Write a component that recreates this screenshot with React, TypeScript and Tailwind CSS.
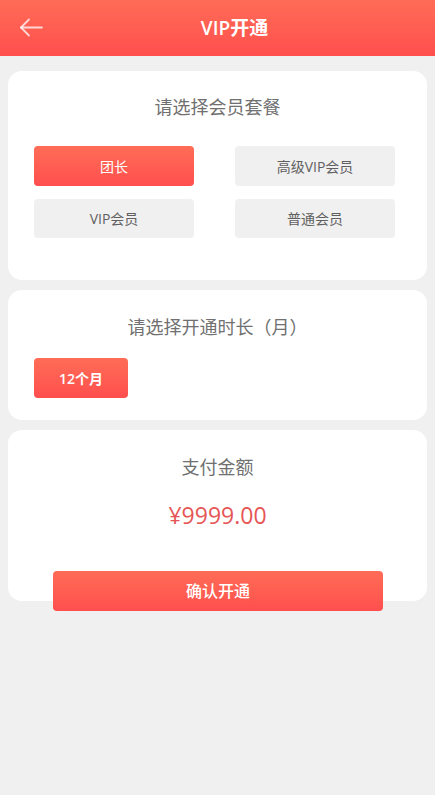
import React from "react";

const font = { fontFamily: '"Open Sans", "Noto Sans CJK SC", sans-serif' };

export default function App() {
  return (
    <div className="min-h-[795px] w-full bg-[#f0f0f0]" style={font}>
      <header className="flex h-14 items-center bg-gradient-to-b from-[#ff6c56] to-[#ff4e4e]">
        <div className="flex w-[34px] shrink-0 justify-end">
          <svg
            width="26"
            height="24"
            viewBox="0 0 26 24"
            fill="none"
            stroke="rgba(255,255,255,0.75)"
            strokeWidth="1.8"
            strokeLinecap="round"
            strokeLinejoin="round"
            className="-mr-[10px] mt-[-1px]"
          >
            <path d="M3 11.5H24" />
            <path d="M11 3.5L3 11.5L11 19.5" />
          </svg>
        </div>
        <h1 className="flex-1 text-center text-[19px] font-semibold leading-6 text-white">VIP开通</h1>
      </header>

      <main className="flex flex-col gap-[10px] px-2 pt-[15px]">
        <section className="flex flex-col rounded-[14px] bg-white pb-[42px] pt-[24px]">
          <h2 className="text-center text-[18px] leading-6 text-[#707070]">请选择会员套餐</h2>
          <div className="mt-[27px] grid grid-cols-[160px_160px] gap-x-[41px] gap-y-[13px] pl-[26px]">
            <button className="h-10 rounded bg-gradient-to-b from-[#ff6c56] to-[#ff4e4e] text-[14px] text-white">
              团长
            </button>
            <button className="h-10 rounded bg-[#f0f0f0] text-[14px] text-[#606060]">高级VIP会员</button>
            <button className="h-[39px] rounded bg-[#f0f0f0] text-[14px] text-[#606060]">VIP会员</button>
            <button className="h-[39px] rounded bg-[#f0f0f0] text-[14px] text-[#606060]">普通会员</button>
          </div>
        </section>

        <section className="flex flex-col rounded-[14px] bg-white pb-[22px] pt-[25px]">
          <h2 className="text-center text-[18px] leading-6 text-[#707070]">请选择开通时长（月）</h2>
          <div className="mt-[19px] pl-[26px]">
            <button className="h-10 w-[94px] rounded bg-gradient-to-b from-[#ff6c56] to-[#ff4e4e] text-[14px] font-semibold text-white">
              12个月
            </button>
          </div>
        </section>

        <section className="flex flex-col items-center rounded-[14px] bg-white pt-[25px]">
          <h2 className="text-center text-[18px] leading-6 text-[#707070]">支付金额</h2>
          <div className="mt-[20px] text-[23px] leading-8 text-[#e65656]">¥9999.00</div>
          <button className="-mb-[10px] ml-[1px] mt-[40px] h-10 w-[330px] rounded bg-gradient-to-b from-[#ff6c56] to-[#ff4e4e] text-[16px] font-medium text-white">
            确认开通
          </button>
        </section>
      </main>
    </div>
  );
}
